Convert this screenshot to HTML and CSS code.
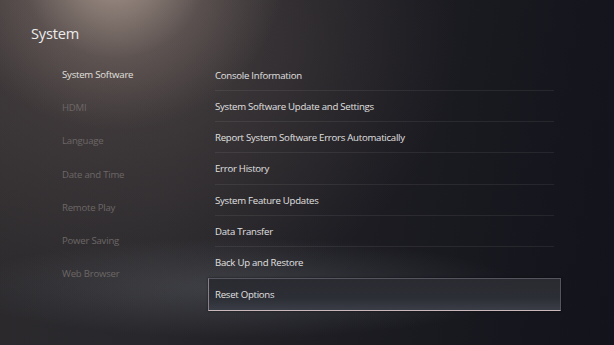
FILE: index.html
```html
<!DOCTYPE html>
<html lang="en">
<head>
    <meta charset="UTF-8">
    <title>System</title>
    <link rel="stylesheet" href="styles.css">
</head>
<body>
    <div class="screen">
        <h1 class="page-title">System</h1>
        <div class="settings">
            <ul class="side-menu">
                <li class="active">System Software</li>
                <li>HDMI</li>
                <li>Language</li>
                <li>Date and Time</li>
                <li>Remote Play</li>
                <li>Power Saving</li>
                <li>Web Browser</li>
            </ul>
            <ul class="option-list">
                <li>Console Information</li>
                <li>System Software Update and Settings</li>
                <li>Report System Software Errors Automatically</li>
                <li>Error History</li>
                <li>System Feature Updates</li>
                <li>Data Transfer</li>
                <li>Back Up and Restore</li>
                <li class="focused">Reset Options</li>
            </ul>
        </div>
    </div>
</body>
</html>
```

FILE: styles.css
```css
/* Whole screen */
body {
    margin: 0;
    font-family: "Open Sans", "Noto Sans", sans-serif;
    background: #15161e;
}

.screen {
    width: 614px;
    height: 345px;
    overflow: hidden;
    color: #dcdcdc;
    background:
        radial-gradient(ellipse 280px 50px at 240px 288px, rgba(110, 116, 124, 0.35), rgba(110, 116, 124, 0) 100%),
        radial-gradient(ellipse 170px 160px at 115px -30px, rgba(205, 185, 170, 0.75), rgba(170, 150, 140, 0.25) 55%, rgba(120, 105, 100, 0) 100%),
        radial-gradient(ellipse 340px 270px at 120px 40px, rgba(95, 82, 80, 0.55), rgba(80, 70, 70, 0) 100%),
        linear-gradient(100deg, #2c2a2d 0%, #28272b 30%, #1c1c22 60%, #12131b 100%);
}

/* Title */
.page-title {
    margin: 0;
    padding: 23px 0 0 31px;
    height: 35px;
    font-size: 14.6px;
    font-weight: 400;
    color: #ececec;
    letter-spacing: -0.2px;
}

.settings {
    display: flex;
}

/* Left menu */
.side-menu {
    list-style: none;
    margin: 0;
    padding: 0 0 0 62px;
    width: 146px;
}

.side-menu li {
    height: 33.2px;
    line-height: 33.2px;
    font-size: 9.6px;
    letter-spacing: -0.22px;
    color: #6c6766;
    white-space: nowrap;
}

.side-menu li.active {
    color: #e2e0df;
}

/* Right options */
.option-list {
    list-style: none;
    margin: 0;
    padding: 1.5px 0 0;
    width: 353px;
}

.option-list li {
    box-sizing: border-box;
    height: 31.25px;
    line-height: 31px;
    margin: 0 7px;
    border-bottom: 1px solid rgba(255, 255, 255, 0.07);
    font-size: 9.6px;
    letter-spacing: -0.25px;
    color: #e0e0e0;
    white-space: nowrap;
}

.option-list li:nth-child(7) {
    border-bottom: none;
}

.option-list li.focused {
    height: 33px;
    line-height: 31px;
    margin: 0;
    padding: 0 6px;
    border: 1px solid #55555f;
    border-bottom-color: #c9b9bd;
    border-left-color: #8a8088;
    background: linear-gradient(180deg, #2a2b31 0%, #2c2e35 60%, #3a3d46 100%);
    box-shadow: 0 0 2px rgba(0, 0, 0, 0.6);
}
```
